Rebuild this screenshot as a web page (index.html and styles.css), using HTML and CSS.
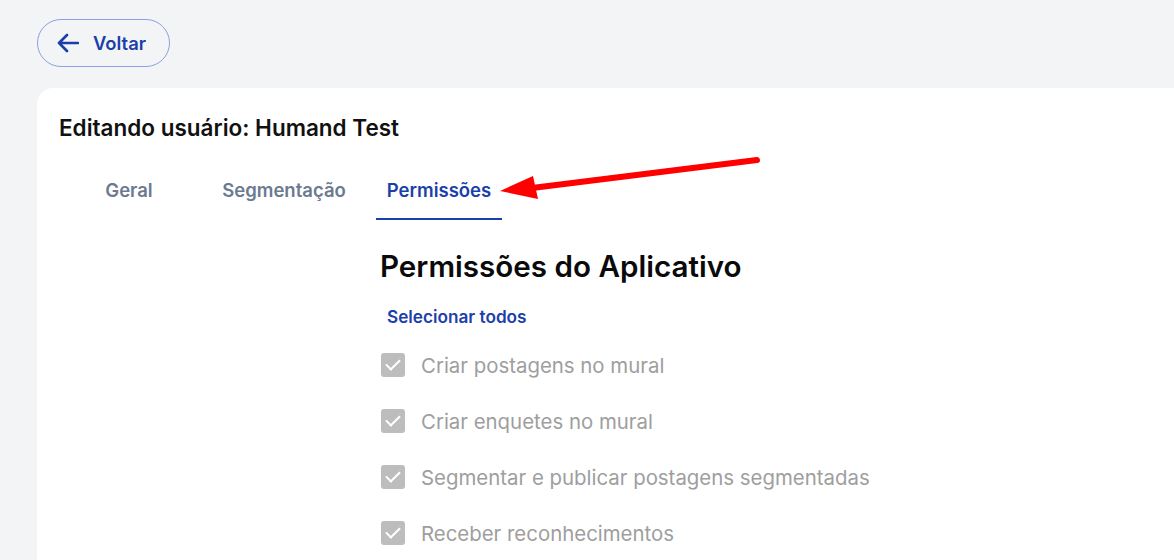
FILE: index.html
```html
<!DOCTYPE html>
<html lang="pt-BR">
<head>
    <meta charset="UTF-8">
    <meta name="viewport" content="width=device-width, initial-scale=1.0">
    <title>Editando usuário</title>
    <link rel="stylesheet" href="styles.css">
</head>
<body>
    <div class="page">
        <button class="back">
            <svg width="22" height="20" viewBox="0 0 22 20">
                <path d="M21 10H2M10 2L2 10l8 8" fill="none" stroke="#1b3fa9" stroke-width="2.6" stroke-linecap="round" stroke-linejoin="round"/>
            </svg>
            <span>Voltar</span>
        </button>

        <div class="card">
            <h1 class="title">Editando usuário: Humand Test</h1>
            <div class="tabs">
                <div class="tab">Geral</div>
                <div class="tab">Segmentação</div>
                <div class="tab active">Permissões</div>
            </div>

            <div class="content">
                <h2 class="heading">Permissões do Aplicativo</h2>
                <div class="select-all">Selecionar todos</div>
                <ul class="perms">
                    <li><span class="check"></span>Criar postagens no mural</li>
                    <li><span class="check"></span>Criar enquetes no mural</li>
                    <li><span class="check"></span>Segmentar e publicar postagens segmentadas</li>
                    <li><span class="check"></span>Receber reconhecimentos</li>
                </ul>
            </div>
        </div>
    </div>

    <!-- seta vermelha de anotação -->
    <svg class="annot" width="1174" height="560" viewBox="0 0 1174 560">
        <path d="M757 160L532 188" stroke="#ff0000" stroke-width="6" stroke-linecap="round"/>
        <polygon points="500,191 533,176 538,199" fill="#ff0000"/>
    </svg>
</body>
</html>
```

FILE: styles.css
```css
*{
    box-sizing: border-box;
}
body{
    margin: 0;
    background: #f3f4f6;
    font-family: Inter, "Noto Sans", sans-serif;
    overflow: hidden;
}
.page{
    padding: 19px 0 0 37px;
}
.back{
    display: flex;
    align-items: center;
    gap: 14px;
    width: 133px;
    height: 48px;
    padding: 0 0 0 19px;
    border: 1px solid #8ca2e0;
    border-radius: 24px;
    background: transparent;
    color: #1b3fa9;
    font-family: inherit;
    font-size: 18.4px;
    font-weight: 600;
}
.card{
    margin-top: 21px;
    height: 500px;
    background: #fff;
    border-radius: 16px 0 0 0;
    padding: 27px 0 0 22px;
}
.title{
    margin: 0;
    font-size: 22.5px;
    font-weight: 600;
    color: #111;
    line-height: 26px;
}
.tabs{
    display: grid;
    grid-template-columns: 126px 184px 126px;
    margin: 24px 0 0 7px;
}
.tab{
    height: 55px;
    padding-top: 14px;
    text-align: center;
    font-size: 18.5px;
    font-weight: 600;
    color: #6c7a91;
}
.tab.active{
    color: #1b3fa9;
    border-bottom: 2px solid #1b3fa9;
}
.content{
    padding-left: 321px;
}
.heading{
    margin: 30px 0 0 0;
    font-size: 29.6px;
    font-weight: 600;
    line-height: 32px;
    color: #0a0a0a;
}
.select-all{
    margin: 24px 0 0 7px;
    font-size: 17.2px;
    font-weight: 600;
    color: #1b3fa9;
    line-height: 22px;
}
.perms{
    list-style: none;
    margin: 9px 0 0 0;
    padding: 0;
}
.perms li{
    display: flex;
    align-items: center;
    height: 56px;
    font-size: 20.4px;
    color: #9e9e9e;
}
.check{
    position: relative;
    width: 24px;
    height: 24px;
    margin: 0 16px 0 1px;
    border-radius: 3px;
    background: #bdbdbd;
}
.check::after{
    content: "";
    position: absolute;
    left: 8px;
    top: 3px;
    width: 6px;
    height: 12px;
    border: solid #fff;
    border-width: 0 2.5px 2.5px 0;
    transform: rotate(45deg);
}
.annot{
    position: absolute;
    left: 0;
    top: 0;
    pointer-events: none;
}
```
